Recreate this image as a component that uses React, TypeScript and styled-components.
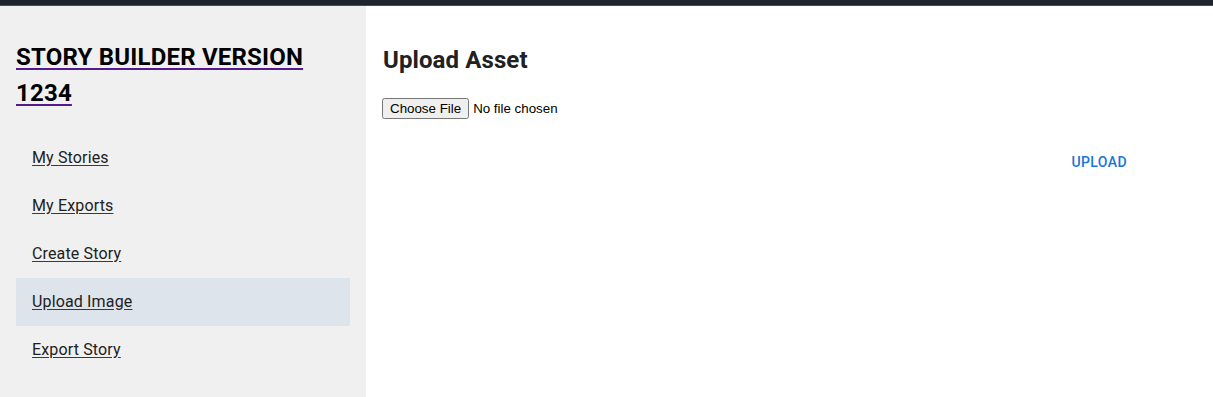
import styled, { createGlobalStyle } from 'styled-components';

const GlobalStyle = createGlobalStyle`
  html, body {
    margin: 0;
    padding: 0;
    background: #fff;
    font-family: Roboto, 'Liberation Sans', sans-serif;
  }
`;

const TopBar = styled.div`
  height: 5px;
  background: #1f232b;
  border-bottom: 1px solid #4a4d52;
`;

const Layout = styled.div`
  display: flex;
  height: 391px;
`;

const Sidebar = styled.aside`
  width: 334px;
  flex-shrink: 0;
  background: #f0f0f0;
  padding: 33px 16px 0;
`;

const TitleLink = styled.a`
  display: block;
  color: #551a8b;
  text-decoration: underline;
  text-decoration-color: #551a8b;
  text-decoration-thickness: 2px;
  text-underline-offset: 3px;
  font-size: 24px;
  letter-spacing: 0.2px;
  font-weight: 700;
  line-height: 36px;
  margin-bottom: 23px;
`;

const TitleText = styled.span`
  color: #000;
`;

const NavList = styled.nav`
  display: flex;
  flex-direction: column;
`;

const NavItem = styled.a<{ $active?: boolean }>`
  display: flex;
  align-items: center;
  height: 48px;
  padding: 0 16px 2px;
  box-sizing: border-box;
  background: ${(p) => (p.$active ? '#dde4ec' : 'transparent')};
  color: #551a8b;
  text-decoration: underline;
  text-decoration-color: #551a8b;
  text-underline-offset: 2px;
  font-size: 16px;
  letter-spacing: 0.00938em;
`;

const NavText = styled.span`
  color: #212121;
`;

const Main = styled.main`
  flex: 1;
  padding: 6px 16px 0;
`;

const Heading = styled.h2`
  margin: 32px 0 22px 1px;
  font-size: 24px;
  letter-spacing: 0.1px;
  font-weight: 700;
  color: #212121;
  line-height: 32px;
`;

const FileInput = styled.input`
  font-family: 'Liberation Sans', Arial, sans-serif;
  font-size: 13.33px;
  margin: 0;
`;

const Actions = styled.div`
  display: flex;
  justify-content: flex-end;
  padding-right: 62px;
  margin-top: 25px;
`;

const TextButton = styled.button`
  background: none;
  border: none;
  padding: 6px 8px;
  font-family: Roboto, sans-serif;
  font-size: 14px;
  font-weight: 500;
  letter-spacing: 0.02857em;
  text-transform: uppercase;
  color: #1976d2;
  line-height: 24px;
  cursor: pointer;
`;

const links = ['My Stories', 'My Exports', 'Create Story', 'Upload Image', 'Export Story'];

const App = () => {
  return (
    <>
      <GlobalStyle />
      <TopBar />
      <Layout>
        <Sidebar>
          <TitleLink href='#'>
            <TitleText>STORY BUILDER VERSION 1234</TitleText>
          </TitleLink>
          <NavList>
            {links.map((l) => (
              <NavItem key={l} href='#' $active={l === 'Upload Image'}>
                <NavText>{l}</NavText>
              </NavItem>
            ))}
          </NavList>
        </Sidebar>
        <Main>
          <Heading>Upload Asset</Heading>
          <FileInput type='file' />
          <Actions>
            <TextButton>Upload</TextButton>
          </Actions>
        </Main>
      </Layout>
    </>
  );
};

export default App;
